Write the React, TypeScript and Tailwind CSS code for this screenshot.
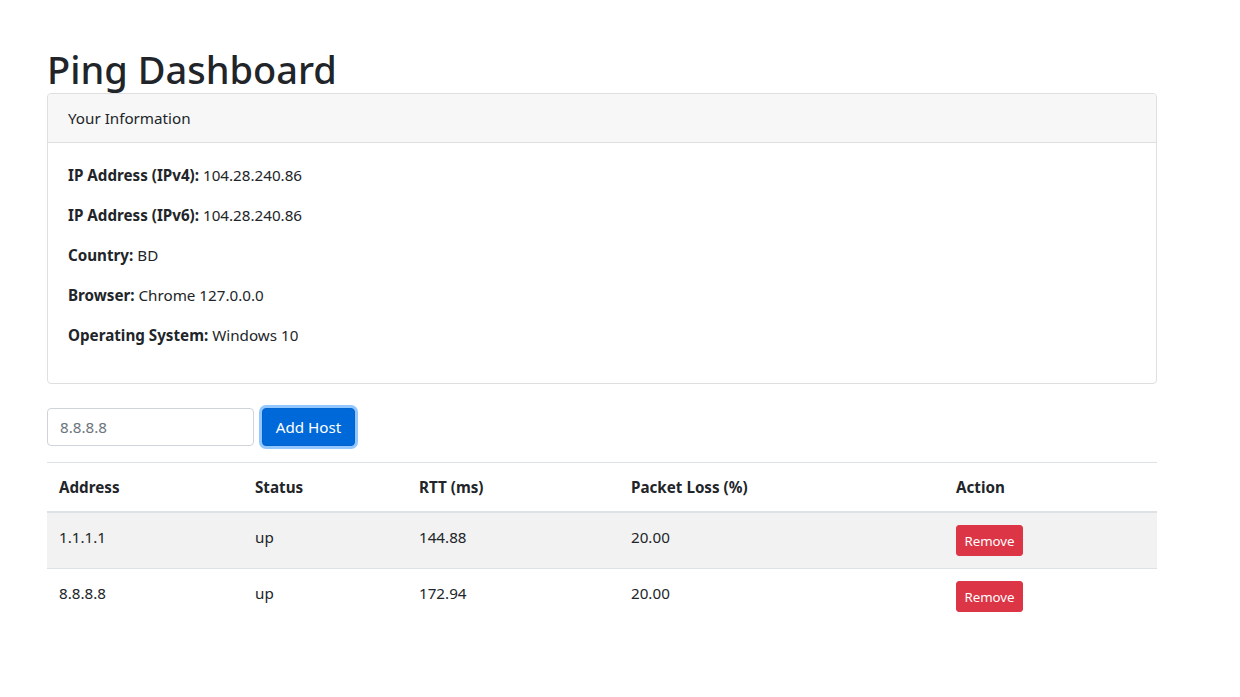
const hosts = [
  { address: "1.1.1.1", status: "up", rtt: "144.88", loss: "20.00" },
  { address: "8.8.8.8", status: "up", rtt: "172.94", loss: "20.00" },
];

const info = [
  { label: "IP Address (IPv4):", value: "104.28.240.86" },
  { label: "IP Address (IPv6):", value: "104.28.240.86" },
  { label: "Country:", value: "BD" },
  { label: "Browser:", value: "Chrome 127.0.0.0" },
  { label: "Operating System:", value: "Windows 10" },
];

const App = () => {
  return (
    <div className="min-h-screen bg-white text-[#212529] font-['Noto_Sans',sans-serif] text-[15.2px] leading-6">
      <div className="ml-[47px] w-[1110px] pt-[45px]">
        <h1 className="text-[38px] leading-[48px] font-medium mb-0">Ping Dashboard</h1>

        <div className="border border-[#dfdfdf] rounded">
          <div className="px-5 py-3 bg-[#f7f7f7] border-b border-[#dfdfdf] rounded-t">
            Your Information
          </div>
          <div className="p-5">
            {info.map((item) => (
              <p key={item.label} className="mb-4">
                <strong className="font-bold">{item.label}</strong> {item.value}
              </p>
            ))}
          </div>
        </div>

        <form className="flex gap-2 mt-6">
          <input
            type="text"
            placeholder="8.8.8.8"
            className="w-[207px] h-[38px] px-3 border border-[#ced4da] rounded text-[#495057] placeholder:text-[#6c757d] outline-none"
          />
          <button
            type="button"
            className="h-[38px] w-[93px] text-white bg-[#0069d9] border border-[#0062cc] rounded shadow-[0_0_0_3px_rgba(38,143,255,0.5)]"
          >
            Add Host
          </button>
        </form>

        <table className="w-full mt-4 border-collapse text-left">
          <thead>
            <tr className="border-t border-[#dee2e6] border-b-2">
              <th className="w-[196px] p-3 font-bold">Address</th>
              <th className="w-[164px] p-3 font-bold">Status</th>
              <th className="w-[212px] p-3 font-bold">RTT (ms)</th>
              <th className="w-[325px] p-3 font-bold">Packet Loss (%)</th>
              <th className="p-3 font-bold">Action</th>
            </tr>
          </thead>
          <tbody>
            {hosts.map((h, i) => (
              <tr
                key={h.address}
                className={i % 2 === 0 ? "bg-[#f2f2f2] border-t border-[#dee2e6]" : "border-t border-[#dee2e6]"}
              >
                <td className="p-3 align-top">{h.address}</td>
                <td className="p-3 align-top">{h.status}</td>
                <td className="p-3 align-top">{h.rtt}</td>
                <td className="p-3 align-top">{h.loss}</td>
                <td className="p-3 align-top">
                  <button
                    type="button"
                    className="w-[67px] h-[31px] text-[13.3px] text-white bg-[#dc3545] border border-[#dc3545] rounded-[3px]"
                  >
                    Remove
                  </button>
                </td>
              </tr>
            ))}
          </tbody>
        </table>
      </div>
    </div>
  );
};

export default App;
